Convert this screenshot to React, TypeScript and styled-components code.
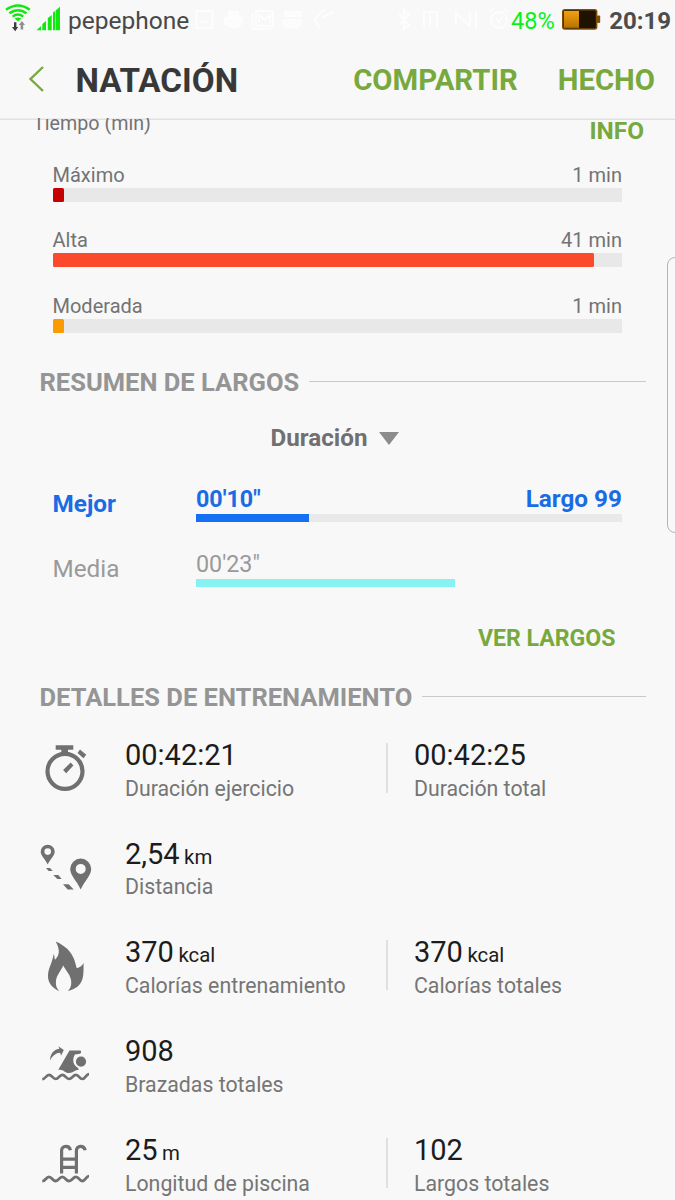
import React from "react";
import styled, { createGlobalStyle } from "styled-components";

const GlobalStyle = createGlobalStyle`
  html, body { margin: 0; background: #f8f8f8; }
  * { box-sizing: border-box; }
`;

const GREEN = "#77a93f";
const ICON = "#707070";

const Screen = styled.div`
  position: relative;
  width: 675px;
  height: 1200px;
  overflow: hidden;
  background: #f8f8f8;
  font-family: Roboto, "Liberation Sans", sans-serif;
  display: flex;
  flex-direction: column;
  white-space: nowrap;
`;

/* ---------- status bar ---------- */

const StatusBar = styled.div`
  display: flex;
  height: 40px;
  padding-left: 4px;
  padding-right: 4px;
  flex: none;
`;

const SignalIcons = styled.svg`
  width: 64px;
  height: 40px;
  flex: none;
`;

const Carrier = styled.span`
  font-size: 24.5px;
  line-height: 41px;
  color: #484848;
  width: 121px;
`;

const GhostIcons = styled.svg`
  width: 322px;
  height: 40px;
  flex: none;
  fill: none;
  stroke: #fdfdfd;
  stroke-width: 2;
`;

const BatteryPercent = styled.span`
  font-size: 23.6px;
  line-height: 42px;
  color: #08f018;
  width: 49px;
`;

const BatteryIcon = styled.svg`
  width: 42px;
  height: 40px;
  flex: none;
`;

const Clock = styled.span`
  margin-left: auto;
  font-size: 24px;
  line-height: 42px;
  font-weight: 700;
  color: #4c4c4c;
`;

/* ---------- app bar ---------- */

const AppBar = styled.header`
  display: flex;
  height: 78px;
  flex: none;
  padding: 17px 20px 0 28px;
`;

const BackIcon = styled.svg`
  width: 47.5px;
  height: 44px;
  fill: none;
  stroke: ${GREEN};
  stroke-width: 2.4;
`;

const Title = styled.h1`
  margin: 0;
  font-size: 33.2px;
  line-height: 47px;
  font-weight: 700;
  color: #383838;
`;

const AppActions = styled.nav`
  margin-left: auto;
  display: flex;
  gap: 40px;
`;

const TextButton = styled.button<{ $size: number; $line: number }>`
  border: 0;
  padding: 0;
  margin: 0;
  background: none;
  font-family: inherit;
  font-weight: 700;
  font-size: ${(p) => p.$size}px;
  line-height: ${(p) => p.$line}px;
  height: ${(p) => p.$line}px;
  color: ${GREEN};
`;

/* ---------- scrolled content ---------- */

const Content = styled.main`
  flex: 1;
  min-height: 0;
  overflow: hidden;
  background: linear-gradient(#ededed 1px, #e0e0e0 1px) top / 100% 2px no-repeat;
`;

const ChartHead = styled.div`
  display: flex;
  justify-content: space-between;
  align-items: flex-start;
  height: 43.9px;
  padding: 0 31px 0 33px;
`;

const ChartTitle = styled.span`
  font-size: 19.7px;
  line-height: 24px;
  margin-top: -6.4px;
  color: #737373;
`;

const Zone = styled.div`
  height: 65.6px;
  padding: 0 53px 0 52.5px;
`;

const ZoneLabels = styled.div`
  display: flex;
  justify-content: space-between;
  font-size: 20px;
  line-height: 26px;
  height: 26px;
  color: #737373;
`;

const ZoneTrack = styled.div`
  height: 14px;
  background: #e8e8e8;
`;

const ZoneFill = styled.div<{ $color: string }>`
  height: 14px;
  border-radius: 1.5px;
  background: ${(p) => p.$color};
`;

const SectionTitle = styled.h2<{ $top: number }>`
  display: flex;
  align-items: center;
  margin: ${(p) => p.$top}px 29.5px 0 39.5px;
  font-size: 25.53px;
  line-height: 30px;
  font-weight: 700;
  color: #959595;

  &::after {
    content: "";
    flex: 1;
    height: 1px;
    margin: -1px 0 0 9.5px;
    background: #cacaca;
  }
`;

const Dropdown = styled.div`
  display: flex;
  align-items: center;
  margin: 26px 0 0 270.6px;
  height: 30px;
  font-size: 24.2px;
  line-height: 30px;
  font-weight: 700;
  color: #707070;
`;

const Caret = styled.span`
  margin: 2px 0 0 12px;
  border: 10.5px solid transparent;
  border-top: 13px solid #8c8c8c;
  border-bottom: 0;
`;

const Laps = styled.div`
  padding: 31.5px 53px 0 52.5px;
`;

const Lap = styled.div<{ $best?: boolean }>`
  display: grid;
  grid-template-columns: 143.5px 1fr;
  height: 65.2px;
  font-size: 24.3px;
  line-height: 30px;
  font-weight: ${(p) => (p.$best ? 700 : 400)};
  color: ${(p) => (p.$best ? "#1a6ce4" : "#9a9a9a")};
`;

const LapName = styled.span`
  padding-top: 4.5px;
`;

const LapValues = styled.div`
  display: flex;
  justify-content: space-between;
`;

const LapTime = styled.span`
  font-size: 23.3px;
`;

const LapTrack = styled.div<{ $filled?: boolean }>`
  height: 8px;
  background: ${(p) => (p.$filled ? "#e9e9e9" : "none")};
`;

const LapFill = styled.div<{ $color: string }>`
  height: 8px;
  background: ${(p) => p.$color};
`;

const MoreRow = styled.div`
  display: flex;
  justify-content: flex-end;
  padding: 9px 59.5px 0 0;
`;

const Details = styled.div`
  padding-top: 26.8px;
`;

const DetailRow = styled.div`
  display: grid;
  grid-template-columns: 87px 261px 28px 1fr;
  padding-left: 38px;
  height: 98.8px;
`;

const DetailIcon = styled.svg`
  width: 56px;
  height: 56px;
  margin-top: 2.4px;
  fill: ${ICON};
`;

const Divider = styled.div`
  width: 2px;
  height: 50px;
  margin-top: 4px;
  background: #e0e0e0;
`;

const Value = styled.div`
  font-size: 29px;
  line-height: 32px;
  height: 36.8px;
  color: #1c1c1c;
`;

const Unit = styled.span`
  font-size: 20.4px;
  line-height: 1;
  margin-left: 4.5px;
`;

const Label = styled.div`
  font-size: 21.3px;
  line-height: 26px;
  color: #757575;
`;

/* Edge panel handle, floating over the right border of the screen. */
const EdgeHandle = styled.div`
  position: absolute;
  top: 257px;
  right: -10px;
  width: 18px;
  height: 276px;
  border: 1px solid #b4b4b4;
  border-radius: 8px;
`;

const WAVE =
  "M4.3 41.2C7.5 41.2 8 36.9 11 36.9S14.7 41 17.7 41S21.3 36.9 24.3 36.9S28 41 31 41S35 36.9 38 36.9S41.3 41 44.3 41S48 36.2 51 36.2";

const Stopwatch = () => (
  <DetailIcon viewBox="0 0 56 56">
    <circle cx="27" cy="30.3" r="17.5" fill="none" stroke={ICON} strokeWidth="4.2" />
    <path d="M17.7 4.3H35.3V8.7H30V12.5H23.3V8.7H17.7Z" />
    <path d="M42 8.600L48.200 13.800L45.500 17.200L39.500 12Z" />
    <path d="M32.700 21.600L35.400 24.600L28.200 32.200L25.100 29Z" />
  </DetailIcon>
);

const Route = () => (
  <DetailIcon viewBox="0 0 56 56" fillRule="evenodd">
    <path d="M9.7 4.7a7 7 0 0 1 7 7C16.7 15.6 12.4 19 9.7 24.5C7 19 2.7 15.6 2.7 11.7a7 7 0 0 1 7-7ZM9.7 8.3a3.3 3.3 0 1 0 0 6.6a3.3 3.3 0 0 0 0-6.6Z" />
    <path d="M42.7 18.6a10.5 10.5 0 0 1 10.5 10.5C53.2 35.5 46.5 41 42.7 49.6C38.9 41 32.2 35.5 32.2 29.1a10.5 10.5 0 0 1 10.5-10.5ZM42.7 23.9a5 5 0 1 0 0 10a5 5 0 0 0 0-10Z" />
    <path d="M8 28H12L14.7 31H10.7ZM15.3 35H20.3L23.7 39H19.3ZM25 44.3H30.7L35.7 49.6H29.7Z" />
  </DetailIcon>
);

const Flame = () => (
  <DetailIcon viewBox="0 0 56 56">
    <path d="M17.7 2.6C27 6.5 33.5 13 36.2 20.5C37.4 24 38 27 38.8 29.3C41.5 28.5 44 27 45.7 24C45.3 29 46 34 44.6 39.5C42.8 46 37.5 50.5 29.7 52C33 49.5 33.7 45 33 41C32 35.5 28 32 25.3 26.6C22.8 32 18.8 36 18 41.6C17.4 46 18.5 50 21.3 52C14.5 49.5 10.2 44 10 37.5C9.7 30 14.5 23.5 15.7 15C16.6 16.5 16.3 19 17 20.8C19.5 18.5 21 15.5 20.8 11.6C20.5 8 19 5 17.7 2.6Z" />
  </DetailIcon>
);

const Swimmer = () => (
  <DetailIcon viewBox="0 0 56 56">
    <path d={WAVE} fill="none" stroke={ICON} strokeWidth="2.7" />
    <path d="M31.5 12.6H42.2Q43.3 12.8 43.1 14Q43 15.8 41.8 15.8L36.8 16.6L35.8 19C34.3 23.500 36 27.500 39.800 29.800L41 31.8C37.5 31.4 35.5 35 31 35S26 31 20.3 31.8Z" />
    <circle cx="43" cy="23.6" r="5.1" />
    <path d="M12 22.6C12.2 16 15.3 11.7 21.4 10.8L20.4 8.2L25.8 12L23 17.8L22.2 14.8C17.8 15 14.5 17.7 12 22.6Z" />
  </DetailIcon>
);

const Ladder = () => (
  <DetailIcon viewBox="0 0 56 56">
    <g fill="none" stroke={ICON} strokeWidth="2.8">
      <path d={WAVE} transform="translate(0 4)" />
      <path
        strokeWidth="3.2"
        d="M23.6 37.5V14.5C23.6 9 31.6 9 32.4 14.2M38.4 37.5V14.5C38.4 9 46.2 9 47.2 14.2M23.6 23.1H38.4M23.6 31.3H38.4"
      />
    </g>
  </DetailIcon>
);

const zones = [
  { name: "Máximo", minutes: 1, color: "#c40000", share: 2 },
  { name: "Alta", minutes: 41, color: "#fb492b", share: 95.1 },
  { name: "Moderada", minutes: 1, color: "#fb9b00", share: 2 },
];

type Stat = { value: string; unit?: string; label: string };

const details: { icon: React.ReactNode; stats: Stat[] }[] = [
  {
    icon: <Stopwatch />,
    stats: [
      { value: "00:42:21", label: "Duración ejercicio" },
      { value: "00:42:25", label: "Duración total" },
    ],
  },
  { icon: <Route />, stats: [{ value: "2,54", unit: "km", label: "Distancia" }] },
  {
    icon: <Flame />,
    stats: [
      { value: "370", unit: "kcal", label: "Calorías entrenamiento" },
      { value: "370", unit: "kcal", label: "Calorías totales" },
    ],
  },
  { icon: <Swimmer />, stats: [{ value: "908", label: "Brazadas totales" }] },
  {
    icon: <Ladder />,
    stats: [
      { value: "25", unit: "m", label: "Longitud de piscina" },
      { value: "102", label: "Largos totales" },
    ],
  },
];

const StatBlock = ({ value, unit, label }: Stat) => (
  <div>
    <Value>
      {value}
      {unit && <Unit>{unit}</Unit>}
    </Value>
    <Label>{label}</Label>
  </div>
);

export default function App() {
  return (
    <Screen>
      <GlobalStyle />
      <StatusBar>
        <SignalIcons viewBox="4 0 64 40">
          <g fill="none" stroke="#10e810" strokeWidth="2.4">
            <path d="M6 9.8Q18 1.2 29.8 9.8" />
            <path d="M9.3 13.3Q18 7 26.5 13.3" />
            <path d="M12.6 16.6Q18 12.6 23.2 16.6" />
          </g>
          <path d="M14.6 18.6Q18 16.2 21.3 18.6L18 21.6Z" fill="#10e810" />
          <path d="M14 22.2H16.4V27H18.2L15.2 31.2L12 27H14Z" fill="#3c3c3c" />
          <path d="M20.6 29.4V25H18.8L22 21L25 25H23.2V29.4Z" fill="#8f8f8f" />
          <path d="M36.5 30.3L41 26V30.3ZM42.3 30.3V24L46 21V30.3ZM47.8 30.3V18L51.7 15V30.3ZM53 30.3V12.6L55 11V30.3ZM55.6 30.3V10.4L60 6.8V30.3Z" fill="#10e810" />
        </SignalIcons>
        <Carrier>pepephone</Carrier>
        <GhostIcons viewBox="189 0 322 40">
          <path d="M196.500 11H212.500V28H196.500ZM201 22H208" />
          <path fill="#fcfcfc" d="M225 18H242V21C242 29 225 29 225 21ZM229 12H238V17H229Z" />
          <path d="M256 11H273V26H256ZM252.500 13V29H271M259 23V15L264.500 20L270 15V23" />
          <path fill="#fcfcfc" d="M285 12H300V16H285ZM283 20H301V23C300 29 285 29 283 23Z" />
          <path d="M324 10L314 20L320 28M322 17L334 12" />
          <path d="M399 14L409 25L404 29V10L409 15L399 25" />
          <path d="M424 27V12H437V28M430 14V27" />
          <path d="M456 26V13L470 26V13M476 12V28" />
          <circle cx="499" cy="20" r="8" />
          <path d="M496 18L499 22L503 17M490 12L493 9M505 9L508 12" />
        </GhostIcons>
        <BatteryPercent>48%</BatteryPercent>
        <BatteryIcon viewBox="560 0 42 40">
          <defs>
            <linearGradient id="charge" x1="0" y1="0" x2="0" y2="1">
              <stop offset="0" stopColor="#f0a010" />
              <stop offset="1" stopColor="#b87400" />
            </linearGradient>
          </defs>
          <rect x="597" y="15.500" width="3.200" height="7.500" rx="1" fill="#7a4e08" />
          <rect x="562.800" y="9.800" width="33.800" height="19.200" rx="2" fill="#1e1300" stroke="#7a4e08" strokeWidth="1.600" />
          <rect x="564" y="11" width="15" height="16.800" fill="url(#charge)" />
        </BatteryIcon>
        <Clock>20:19</Clock>
      </StatusBar>

      <AppBar>
        <BackIcon viewBox="28 57 47.5 44">
          <path d="M43 67L30.500 79L43 91" />
        </BackIcon>
        <Title>NATACIÓN</Title>
        <AppActions>
          <TextButton $size={29.3} $line={46}>COMPARTIR</TextButton>
          <TextButton $size={29.3} $line={46}>HECHO</TextButton>
        </AppActions>
      </AppBar>

      <Content>
        <ChartHead>
          <ChartTitle>Tiempo (min)</ChartTitle>
          <TextButton $size={24.4} $line={26}>INFO</TextButton>
        </ChartHead>

        {zones.map((z) => (
          <Zone key={z.name}>
            <ZoneLabels>
              <span>{z.name}</span>
              <span>{z.minutes} min</span>
            </ZoneLabels>
            <ZoneTrack>
              <ZoneFill $color={z.color} style={{ width: `${z.share}%` }} />
            </ZoneTrack>
          </Zone>
        ))}

        <SectionTitle $top={8}>RESUMEN DE LARGOS</SectionTitle>
        <Dropdown>
          Duración
          <Caret />
        </Dropdown>

        <Laps>
          <Lap $best>
            <LapName>Mejor</LapName>
            <div>
              <LapValues>
                <LapTime>00'10"</LapTime>
                <span>Largo 99</span>
              </LapValues>
              <LapTrack $filled>
                <LapFill $color="#1670f4" style={{ width: "26.5%" }} />
              </LapTrack>
            </div>
          </Lap>
          <Lap>
            <LapName>Media</LapName>
            <div>
              <LapValues>
                <LapTime>00'23"</LapTime>
              </LapValues>
              <LapTrack>
                <LapFill $color="#86f2f2" style={{ width: "60.7%" }} />
              </LapTrack>
            </div>
          </Lap>
        </Laps>

        <MoreRow>
          <TextButton $size={23.1} $line={30}>VER LARGOS</TextButton>
        </MoreRow>

        <SectionTitle $top={28.5}>DETALLES DE ENTRENAMIENTO</SectionTitle>
        <Details>
          {details.map(({ icon, stats }) => (
            <DetailRow key={stats[0].label}>
              {icon}
              <StatBlock {...stats[0]} />
              {stats[1] && <Divider />}
              {stats[1] && <StatBlock {...stats[1]} />}
            </DetailRow>
          ))}
        </Details>
      </Content>

      <EdgeHandle />
    </Screen>
  );
}
